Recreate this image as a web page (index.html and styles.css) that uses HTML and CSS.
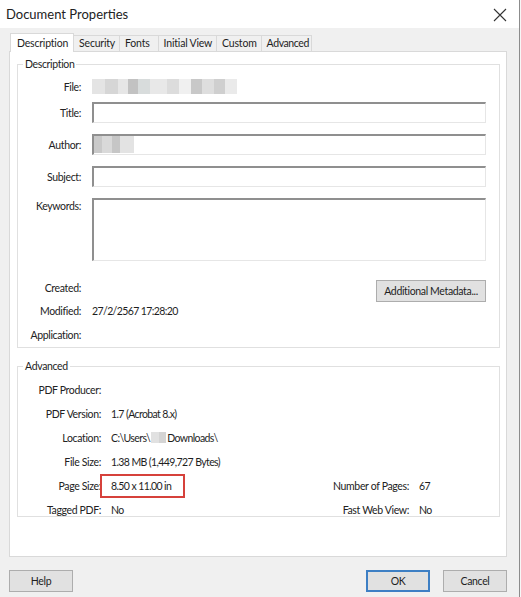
FILE: index.html
```html
<!DOCTYPE html>
<html lang="en">
<head>
    <meta charset="UTF-8">
    <meta name="viewport" content="width=device-width, initial-scale=1.0">
    <title>Document Properties</title>
    <link rel="stylesheet" href="styles.css">
</head>
<body>
    <div class="window">
        <!-- Title bar -->
        <div class="titlebar">
            <h1 class="title">Document Properties</h1>
            <svg class="close" width="14" height="14" viewBox="0 0 14 14">
                <path d="M1 1 L13 13 M13 1 L1 13" stroke="#333" stroke-width="1.1" fill="none"/>
            </svg>
        </div>

        <!-- Tabs -->
        <ul class="tabs">
            <li class="tab active">Description</li>
            <li class="tab">Security</li>
            <li class="tab tab-fonts">Fonts</li>
            <li class="tab">Initial View</li>
            <li class="tab">Custom</li>
            <li class="tab tab-adv">Advanced</li>
        </ul>

        <div class="panel">
            <fieldset class="group group-desc">
                <legend>Description</legend>

                <div class="row row-file">
                    <label>File:</label>
                    <span class="blur blur-file"></span>
                </div>
                <div class="row row-title">
                    <label>Title:</label>
                    <div class="field"></div>
                </div>
                <div class="row row-input">
                    <label>Author:</label>
                    <div class="field"><span class="blur blur-author"></span></div>
                </div>
                <div class="row row-input">
                    <label>Subject:</label>
                    <div class="field"></div>
                </div>
                <div class="row row-input row-keywords">
                    <label>Keywords:</label>
                    <div class="field field-area"></div>
                </div>
                <div class="row row-created">
                    <label>Created:</label>
                    <span class="spacer"></span>
                    <button class="btn btn-meta">Additional Metadata...</button>
                </div>
                <div class="row row-modified">
                    <label>Modified:</label>
                    <span class="value">27/2/2567 17:28:20</span>
                </div>
                <div class="row row-app">
                    <label>Application:</label>
                </div>
            </fieldset>

            <fieldset class="group group-adv">
                <legend>Advanced</legend>
                <div class="adv-grid">
                    <label>PDF Producer:</label>
                    <span class="value"></span>
                    <span></span><span></span>

                    <label>PDF Version:</label>
                    <span class="value">1.7 (Acrobat 8.x)</span>
                    <span></span><span></span>

                    <label>Location:</label>
                    <span class="value">C:\Users\<span class="blur blur-user"></span>Downloads\</span>
                    <span></span><span></span>

                    <label>File Size:</label>
                    <span class="value">1.38 MB (1,449,727 Bytes)</span>
                    <span></span><span></span>

                    <label>Page Size:</label>
                    <span class="value"><span class="highlight">8.50 x 11.00 in</span></span>
                    <label>Number of Pages:</label>
                    <span class="value">67</span>

                    <label>Tagged PDF:</label>
                    <span class="value">No</span>
                    <label>Fast Web View:</label>
                    <span class="value">No</span>
                </div>
            </fieldset>
        </div>

        <!-- Footer buttons -->
        <div class="actions">
            <button class="btn btn-foot">Help</button>
            <span class="spacer"></span>
            <button class="btn btn-foot btn-ok">OK</button>
            <button class="btn btn-foot">Cancel</button>
        </div>
    </div>
</body>
</html>
```

FILE: styles.css
```css
/* General */
body {
    margin: 0;
    padding: 0;
    background-color: #f7f7f7;
    font-family: Lato, "Open Sans", sans-serif;
    font-size: 10.5px;
    letter-spacing: -0.35px;
    color: #1e1e1e;
}

.window {
    width: 519px;
    height: 597px;
    background-color: #f0f0f0;
    border-right: 1px solid #8c8c8c;
}

/* Title bar */
.titlebar {
    height: 28px;
    background-color: #fff;
    display: flex;
    justify-content: space-between;
    align-items: center;
    padding: 0 12px 0 6px;
}

.title {
    margin: 0;
    font-size: 13px;
    font-weight: normal;
    letter-spacing: 0;
    color: #222;
}

.close {
    margin-top: 1px;
}

/* Tabs */
.tabs {
    list-style: none;
    display: flex;
    margin: 5px 0 0 0;
    padding: 0 0 0 10px;
    height: 18px;
    position: relative;
    z-index: 1;
}

.tab {
    margin-top: 2px;
    height: 15px;
    line-height: 15px;
    padding: 0 4px 0 5px;
    border: 1px solid #d9d9d9;
    border-left: none;
    background-color: #f0f0f0;
    letter-spacing: -0.2px;
}

.tab-fonts {
    padding-right: 8px;
}

.tab-adv {
    padding-right: 2px;
    letter-spacing: -0.4px;
}

.tab.active {
    margin-top: 0;
    height: 18px;
    line-height: 19px;
    padding: 0 5px 0 6px;
    background-color: #fff;
    border: 1px solid #d9d9d9;
    border-bottom: none;
}

/* Panel */
.panel {
    margin: 0 12px 0 9px;
    height: 498px;
    background-color: #fff;
    border: 1px solid #d9d9d9;
    padding: 6px 6px 0 7px;
}

.group {
    margin: 0;
    border: 1px solid #e0e0e0;
    padding: 0 5px;
}

.group legend {
    padding: 0 2px;
    line-height: 13px;
}

.group-desc {
    height: 288px;
}

.group-adv {
    margin-top: 12px;
    height: 155px;
}

label {
    color: #222;
}

.value {
    letter-spacing: -0.6px;
}

/* Description rows */
.row {
    display: flex;
    align-items: center;
    height: 21px;
}

.row label {
    width: 58px;
    flex-shrink: 0;
    text-align: right;
    margin-right: 11px;
}

.row-file {
    margin-top: 5px;
}

.row-title {
    margin-top: 5px;
}

.row-input {
    margin-top: 11px;
}

.row-keywords {
    height: 63px;
    align-items: flex-start;
}

.row-keywords label {
    margin-top: 2px;
}

.row-created {
    margin-top: 16px;
}

.row-modified {
    margin-top: 2px;
}

.row-app {
    margin-top: 3px;
}

.field {
    flex: 1;
    height: 21px;
    box-sizing: border-box;
    margin-right: 8px;
    border: 1px solid #e6e6e6;
    border-top: 2px solid #8f8f8f;
    border-left: 2px solid #8f8f8f;
    background: #fff;
}

.field-area {
    height: 63px;
}

.spacer {
    flex: 1;
}

/* Blurred values */
.blur {
    display: inline-block;
}

.blur-file {
    width: 145px;
    height: 15px;
    background: linear-gradient(90deg,
        #e4e4e4 0 9%, #d6d6d6 9% 18%, #e6e6e6 18% 25%, #c2c2c2 25% 32%,
        #d8dcdc 32% 40%, #e8e8e8 40% 52%, #dcdcdc 52% 60%, #f0f0f0 60% 68%,
        #c8c8c8 68% 76%, #dedede 76% 84%, #cfcfcf 84% 92%, #eaeaea 92% 100%);
}

.blur-author {
    width: 40px;
    height: 17px;
    background: linear-gradient(90deg,
        #c9c9c9 0 20%, #d9d9d9 20% 45%, #c6c6c6 45% 65%, #e3e3e3 65% 100%);
}

.blur-user {
    width: 15px;
    height: 11px;
    margin: 0 1px;
    vertical-align: -1px;
    background: linear-gradient(90deg, #e1e1e1 0 50%, #d4d4d4 50% 100%);
}

/* Buttons */
.btn {
    font-family: inherit;
    font-size: 10.5px;
    letter-spacing: -0.35px;
    color: #1e1e1e;
    background-color: #e1e1e1;
    border: 1px solid #adadad;
    padding: 0;
    height: 22px;
}

.btn-meta {
    width: 110px;
    margin-top: 7px;
    margin-right: 8px;
}

/* Advanced grid */
.adv-grid {
    display: grid;
    grid-template-columns: 78px 1fr auto 75px;
    grid-auto-rows: 24px;
    column-gap: 10px;
    align-items: center;
    margin-top: 5px;
}

.adv-grid label {
    text-align: right;
}

.highlight {
    display: inline-block;
    margin-left: -11px;
    padding: 0 12px 0 9px;
    height: 20px;
    line-height: 20px;
    border: 2px solid #d6413b;
}

/* Footer */
.actions {
    display: flex;
    gap: 13px;
    padding: 13px 12px 0 9px;
}

.btn-foot {
    width: 64px;
}

.btn-ok {
    border: 2px solid #3d7fc4;
}
```
